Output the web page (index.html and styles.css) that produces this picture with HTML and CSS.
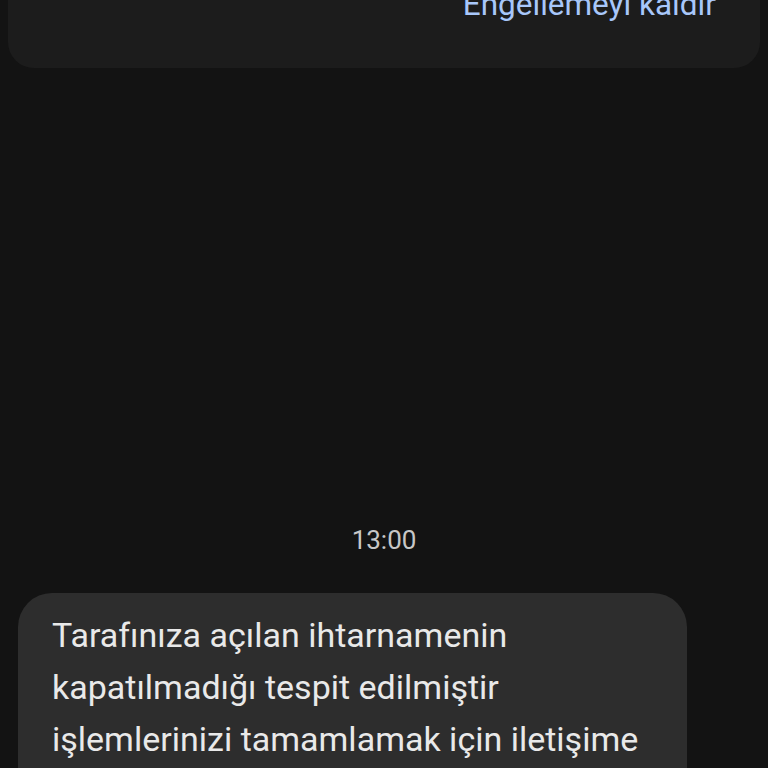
FILE: index.html
```html
<!DOCTYPE html>
<html lang="tr">
<head>
<meta charset="utf-8">
<link rel="stylesheet" href="styles.css">
</head>
<body>
<div class="screen">
  <div class="card">
    <div class="card-action">Engellemeyi kaldır</div>
  </div>
  <div class="thread">
    <div class="timestamp">13:00</div>
    <div class="bubble">
      <p class="bubble-text">Tarafınıza açılan ihtarnamenin kapatılmadığı tespit edilmiştir işlemlerinizi tamamlamak için iletişime geçiniz</p>
    </div>
  </div>
</div>
</body>
</html>
```
FILE: styles.css
```css
html, body {
  margin: 0;
  padding: 0;
  background: #131313;
  height: 768px;
  overflow: hidden;
  font-family: Roboto, "Noto Sans", sans-serif;
}
.screen {
  display: flex;
  flex-direction: column;
  height: 768px;
  overflow: hidden;
}
.card {
  flex-shrink: 0;
  margin: -40px 8px 0 8px;
  height: 108px;
  background: #1c1c1c;
  border-radius: 26px;
  display: flex;
  justify-content: flex-end;
  align-items: flex-start;
  box-sizing: border-box;
  padding: 30px 44px 0 0;
}
.card-action {
  color: #a8c7fa;
  font-size: 31.5px;
  line-height: 30px;
}
.thread {
  flex-shrink: 0;
  display: flex;
  flex-direction: column;
  padding-top: 456px;
}
.timestamp {
  flex-shrink: 0;
  text-align: center;
  color: #c7c7c7;
  font-size: 26px;
  line-height: 32px;
}
.bubble {
  flex-shrink: 0;
  margin: 37px 0 0 18px;
  width: 669px;
  background: #2d2d2d;
  border-radius: 34px;
  box-sizing: border-box;
  padding: 16px 30px 20px 34px;
}
.bubble-text {
  margin: 0;
  color: #e9e9e9;
  font-size: 34px;
  line-height: 52px;
}
```
